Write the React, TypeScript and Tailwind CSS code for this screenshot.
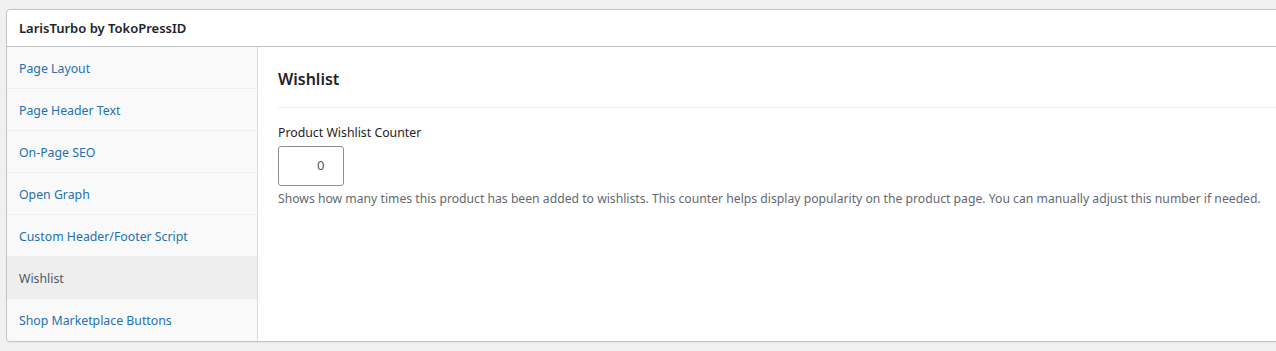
export default function App() {
  const tabs = [
    "Page Layout",
    "Page Header Text",
    "On-Page SEO",
    "Open Graph",
    "Custom Header/Footer Script",
    "Wishlist",
    "Shop Marketplace Buttons",
  ];
  const active = "Wishlist";

  return (
    <div
      className="w-[1276px] h-[351px] bg-[#f0f0f1] pl-[6px] pt-[9px] overflow-hidden"
      style={{ fontFamily: "'Noto Sans', 'Open Sans', sans-serif" }}
    >
      <div className="w-[1300px] bg-white border border-[#c3c4c7] rounded-[4px] shadow-[0_1px_1px_rgba(0,0,0,0.04)]">
        <div className="h-[37px] flex items-center pl-[12px] border-b border-[#c3c4c7]">
          <h2 className="text-[13px] font-semibold text-[#1d2327] leading-none">LarisTurbo by TokoPressID</h2>
        </div>
        <div className="flex">
          <ul className="w-[251px] shrink-0 bg-[#f9f9f9] border-r border-[#dcdcde] rounded-bl-[4px]">
            {tabs.map((t, i) => (
              <li
                key={t}
                className={`h-[42px] flex items-center pl-[12px] pt-[3px] text-[12.3px] ${
                  i < tabs.length - 1 ? "border-b border-[#eeeeee]" : ""
                } ${t === active ? "bg-[#eeeeee] text-[#50575e]" : "text-[#2271b1]"}`}
              >
                {t}
              </li>
            ))}
          </ul>
          <div className="flex-1 pl-[20px] pt-[20px]">
            <h3 className="text-[16px] font-semibold text-[#1d2327] leading-[24px] pb-[16px] border-b border-[#eeeeee]">
              Wishlist
            </h3>
            <div className="pt-[15px]">
              <label className="block text-[12.3px] text-[#1d2327] leading-[20px]">Product Wishlist Counter</label>
              <div className="mt-[3px] w-[66px] h-[40px] border border-[#8c8f94] rounded-[3px] flex items-center pl-[38px] text-[13px] text-[#50575e]">
                0
              </div>
              <p className="mt-[3px] text-[12.2px] text-[#646970] leading-[20px] whitespace-nowrap">
                Shows how many times this product has been added to wishlists. This counter helps display popularity on the product page. You can manually adjust this number if needed.
              </p>
            </div>
          </div>
        </div>
      </div>
    </div>
  );
}
